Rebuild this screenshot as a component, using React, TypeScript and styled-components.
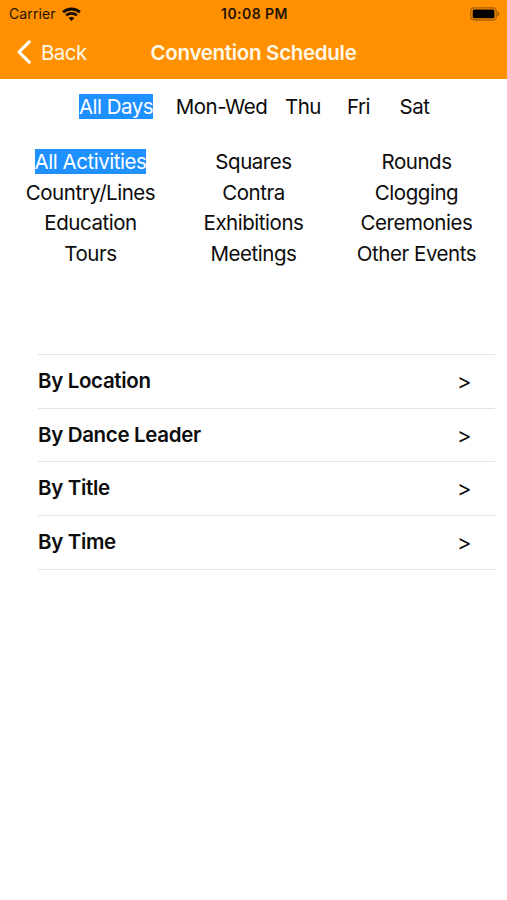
import React from 'react';
import styled, { createGlobalStyle } from 'styled-components';

const Global = createGlobalStyle`
  * { box-sizing: border-box; }
  body { margin: 0; background: #fff; color: #0c0c0c; font-family: Inter, "Liberation Sans", sans-serif; }
`;
const Screen = styled.main`
  width: 507px; height: 900px; overflow: hidden; background: #fff;
`;
const Header = styled.header`
  height: 79px; background: #ff9100;
`;
const StatusBar = styled.div`
  height: 26px; display: grid; grid-template-columns: 1fr auto 1fr; align-items: center;
  padding: 0 7px 0 9px; font-size: 14px; line-height: 26px; color: #1f1300;
`;
const Carrier = styled.div`
  display: flex; align-items: center; gap: 6px; letter-spacing: 0.1px; padding-top: 1px;
`;
const Clock = styled.div`
  font-weight: 600; letter-spacing: 0.45px; padding-top: 1px;
`;
const Battery = styled.svg`
  justify-self: end; display: block;
`;
const NavBar = styled.nav`
  height: 52px; display: grid; grid-template-columns: 1fr auto 1fr; align-items: center;
  padding: 0 16px; color: #fff;
`;
const Back = styled.div`
  display: flex; align-items: center; gap: 9px; font-size: 20.5px; letter-spacing: -0.55px; color: #fff8e8;
`;
const Heading = styled.h1`
  margin: 0; font-size: 20.5px; line-height: 25px; font-weight: 600; letter-spacing: -0.3px; color: #fff8e8;
`;
const Label = styled.span<{ $on?: boolean }>`
  display: block; height: 25px; line-height: 25px; font-size: 20.5px;
  letter-spacing: -0.5px; white-space: nowrap;
  background: ${p => (p.$on ? '#1e90ff' : 'transparent')}; color: ${p => (p.$on ? '#fff' : 'inherit')};
`;
const Days = styled.div`
  display: grid; grid-template-columns: 86px 125px 38px 73px 39px; justify-items: center;
  padding: 15px 0 0 73px;
`;
const Activities = styled.div`
  display: grid; grid-template-columns: repeat(3, 163px); justify-content: center;
  justify-items: center; row-gap: 5.67px; margin-top: 30px;
  ${Label} { letter-spacing: -0.46px; }
`;
const List = styled.div`
  margin: 88px 12px 0 38px; border-top: 1px solid #e4e4e4;
`;
const Row = styled.div`
  height: 53.75px; display: flex; align-items: center; justify-content: space-between;
  padding: 0 23.5px 2px 0; border-bottom: 1px solid #e4e4e4;
  font-size: 20.5px; font-weight: 600; letter-spacing: -0.34px;
`;
const Chevron = styled.span`
  font-size: 22px; font-weight: 400; letter-spacing: 0; padding-top: 1px;
`;

const activities = [
  'All Activities', 'Squares', 'Rounds',
  'Country/Lines', 'Contra', 'Clogging',
  'Education', 'Exhibitions', 'Ceremonies',
  'Tours', 'Meetings', 'Other Events',
];
const days = ['All Days', 'Mon-Wed', 'Thu', 'Fri', 'Sat'];
const lists = ['By Location', 'By Dance Leader', 'By Title', 'By Time'];

function WifiIcon() {
  return (
    <svg width="19" height="15" viewBox="0 0 19 15" fill="none" stroke="#160d00">
      <path d="M1.1 5.2C5.8 .9 13.2 .9 17.9 5.2" strokeWidth="2.9" />
      <path d="M4.1 8.4C7.1 5.7 11.9 5.7 14.9 8.4" strokeWidth="2.6" />
      <path d="M9.5 14 6.6 11.1C8.2 9.6 10.8 9.6 12.4 11.1Z" fill="#160d00" stroke="none" />
    </svg>
  );
}

export default function App() {
  return (
    <Screen>
      <Global />
      <Header>
        <StatusBar>
          <Carrier>Carrier<WifiIcon /></Carrier>
          <Clock>10:08 PM</Clock>
          <Battery width="30" height="14" viewBox="0 0 30 14">
            <rect x=".8" y=".8" width="25.4" height="12.2" rx="3.2" fill="none" stroke="#a96000" strokeWidth="1.3" />
            <rect x="2.7" y="2.5" width="21.7" height="8.8" rx="1.5" fill="#000" />
            <path d="M27.5 4.6c2.6 1 2.6 3.6 0 4.6z" fill="#a96000" />
          </Battery>
        </StatusBar>
        <NavBar>
          <Back>
            <svg width="16" height="24" viewBox="0 0 16 24" fill="none" stroke="#fff" strokeWidth="3.1" strokeLinecap="round" strokeLinejoin="round">
              <path d="M13.2 1.8 3 12l10.2 10.2" />
            </svg>
            Back
          </Back>
          <Heading>Convention Schedule</Heading>
        </NavBar>
      </Header>
      <Days>{days.map((t, i) => <Label key={t} $on={i === 0}>{t}</Label>)}</Days>
      <Activities>{activities.map((t, i) => <Label key={t} $on={i === 0}>{t}</Label>)}</Activities>
      <List>
        {lists.map(t => <Row key={t}>{t}<Chevron>&gt;</Chevron></Row>)}
      </List>
    </Screen>
  );
}
